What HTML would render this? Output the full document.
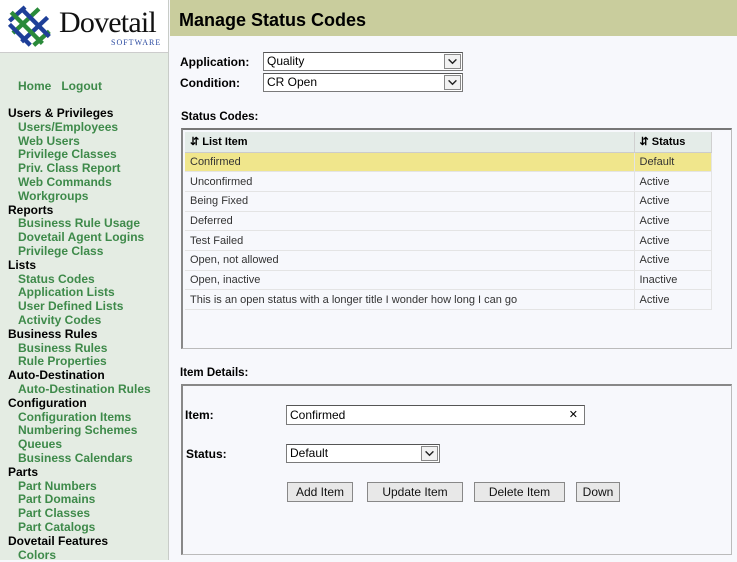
<!DOCTYPE html>
<html><head><style>
*{margin:0;padding:0;box-sizing:border-box}
body{width:737px;height:560px;overflow:hidden;background:#f7f8fc;font-family:"Liberation Sans",Arial,sans-serif;font-size:12px;position:relative}
.a{position:absolute}
#side{left:0;top:0;width:169px;height:560px;background:#e4ece3;border-right:1px solid #c8ccc8}
#logo{left:0;top:0;width:168px;height:53px;background:#fff;border-bottom:1px solid #ccc}
.nav{position:absolute;left:8px;top:107px;line-height:13.8px;font-weight:bold;font-size:12px}
.nav div{color:#000}
.nav .l{color:#3e8a4a;padding-left:10px}
#hdr{left:170px;top:0;width:567px;height:36px;background:#c9cd9d}
#hdr span{position:absolute;left:9px;top:10px;font-size:18px;font-weight:bold;color:#000}
.lbl{font-weight:bold;font-size:12px}
.sel{background:#fff;border:1px solid #7a7a7a;border-top-color:#555;font-size:12px;padding-left:3px;line-height:17px}
.dd{position:absolute;right:1px;top:1px;width:17px;height:15px;border:1px solid #888;background:#f2f2f2}
table{border-collapse:collapse;font-size:11px;color:#333}
td{height:19.7px;border-bottom:1px solid #e4e4e4;border-right:1px solid #e4e4e4;padding-left:5px}
th{height:20px;background:#e4ece8;text-align:left;padding-left:5px;border-right:1px solid #d0d0d0;border-bottom:1px solid #ccc;font-size:11px;color:#000}
.btn{position:absolute;top:482px;height:20px;background:#e8e8e8;border:1px solid #888;font-size:12px;text-align:center;line-height:18px;color:#111}
</style></head><body>
<svg width="0" height="0" style="position:absolute"><defs><symbol id="chev" viewBox="0 0 17 15"><path d="M4 5 L8.5 9.5 L13 5" fill="none" stroke="#222" stroke-width="1.6"/></symbol></defs></svg>
<div id="side" class="a">
<div id="logo" class="a">
<svg width="52" height="46" style="position:absolute;left:6px;top:4px" viewBox="0 0 60 50">
<g stroke-width="5" stroke-linecap="butt">
<line x1="4" y1="18" x2="22" y2="2" stroke="#1e3f98"/>
<line x1="8" y1="32" x2="38" y2="4" stroke="#2a8a3a"/>
<line x1="18" y1="42" x2="48" y2="14" stroke="#1e3f98"/>
<line x1="32" y1="46" x2="50" y2="30" stroke="#2a8a3a"/>
<line x1="6" y1="8" x2="42" y2="44" stroke="#2a8a3a"/>
<line x1="18" y1="4" x2="50" y2="36" stroke="#1e3f98"/>
<line x1="4" y1="22" x2="28" y2="46" stroke="#1e3f98"/>
</g></svg>
<div class="a" style="left:59px;top:6px;font-family:'Liberation Serif',serif;font-size:30px;color:#111;letter-spacing:-0.8px">Dovetail</div>
<div class="a" style="left:111px;top:38px;font-family:'Liberation Serif',serif;font-size:8px;color:#2a4aa0;letter-spacing:1px">SOFTWARE</div>
</div>
<div class="a" style="left:18px;top:79px;font-size:12px;font-weight:bold;color:#3e8a4a">Home&nbsp;&nbsp;&nbsp;Logout</div>
<div class="nav">
<div>Users &amp; Privileges</div><div class="l">Users/Employees</div><div class="l">Web Users</div><div class="l">Privilege Classes</div><div class="l">Priv. Class Report</div><div class="l">Web Commands</div><div class="l">Workgroups</div>
<div>Reports</div><div class="l">Business Rule Usage</div><div class="l">Dovetail Agent Logins</div><div class="l">Privilege Class</div>
<div>Lists</div><div class="l">Status Codes</div><div class="l">Application Lists</div><div class="l">User Defined Lists</div><div class="l">Activity Codes</div>
<div>Business Rules</div><div class="l">Business Rules</div><div class="l">Rule Properties</div>
<div>Auto-Destination</div><div class="l">Auto-Destination Rules</div>
<div>Configuration</div><div class="l">Configuration Items</div><div class="l">Numbering Schemes</div><div class="l">Queues</div><div class="l">Business Calendars</div>
<div>Parts</div><div class="l">Part Numbers</div><div class="l">Part Domains</div><div class="l">Part Classes</div><div class="l">Part Catalogs</div>
<div>Dovetail Features</div><div class="l">Colors</div>
</div>
</div>
<div id="hdr" class="a"><span>Manage Status Codes</span></div>

<div class="a lbl" style="left:180px;top:55px">Application:</div>
<div class="a sel" style="left:263px;top:52px;width:200px;height:19px">Quality<div class="dd"><svg width="15" height="13"><use href="#chev"/></svg></div></div>
<div class="a lbl" style="left:180px;top:76px">Condition:</div>
<div class="a sel" style="left:263px;top:73px;width:200px;height:19px">CR Open<div class="dd"><svg width="15" height="13"><use href="#chev"/></svg></div></div>

<div class="a lbl" style="left:181px;top:111px;font-size:11.5px">Status Codes:</div>
<div class="a" style="left:181px;top:128px;width:551px;height:221px;border:1px solid #bbb;border-top:2px solid #777;border-left:2px solid #888">
<table style="position:absolute;left:2px;top:2px;width:527px">
<tr><th style="width:449px">&#8693; List Item</th><th>&#8693; Status</th></tr>
<tr style="background:#f0e68c"><td>Confirmed</td><td>Default</td></tr>
<tr><td>Unconfirmed</td><td>Active</td></tr>
<tr><td>Being Fixed</td><td>Active</td></tr>
<tr><td>Deferred</td><td>Active</td></tr>
<tr><td>Test Failed</td><td>Active</td></tr>
<tr><td>Open, not allowed</td><td>Active</td></tr>
<tr><td>Open, inactive</td><td>Inactive</td></tr>
<tr><td>This is an open status with a longer title I wonder how long I can go</td><td>Active</td></tr>
</table>
</div>

<div class="a lbl" style="left:180px;top:367px;font-size:11.5px">Item Details:</div>
<div class="a" style="left:181px;top:384px;width:551px;height:171px;border:1px solid #bbb;border-top:2px solid #888;border-left:2px solid #888"></div>
<div class="a lbl" style="left:185px;top:408px">Item:</div>
<div class="a sel" style="left:286px;top:405px;width:299px;height:20px;line-height:18px">Confirmed<span style="position:absolute;right:6px;font-size:11px">&#x2715;</span></div>
<div class="a lbl" style="left:186px;top:447px">Status:</div>
<div class="a sel" style="left:286px;top:444px;width:154px;height:19px">Default<div class="dd"><svg width="15" height="13"><use href="#chev"/></svg></div></div>
<div class="btn" style="left:287px;width:66px">Add Item</div>
<div class="btn" style="left:367px;width:96px">Update Item</div>
<div class="btn" style="left:474px;width:91px">Delete Item</div>
<div class="btn" style="left:576px;width:44px">Down</div>
</body></html>
